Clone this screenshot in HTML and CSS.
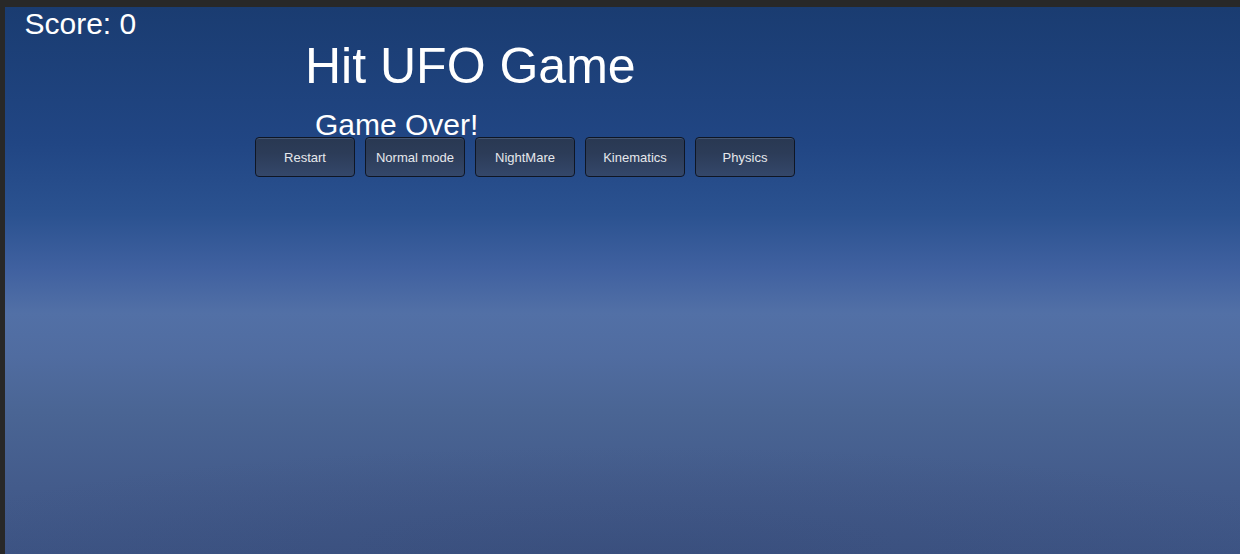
FILE: index.html
```html
<!DOCTYPE html>
<html>
<head>
<meta charset="utf-8">
<link rel="stylesheet" href="styles.css">
</head>
<body>
<div class="frame">
  <main class="game">
    <div class="score">Score: 0</div>
    <h1 class="title">Hit UFO Game</h1>
    <div class="status">Game Over!</div>
    <div class="buttons">
      <button class="btn">Restart</button>
      <button class="btn">Normal mode</button>
      <button class="btn">NightMare</button>
      <button class="btn">Kinematics</button>
      <button class="btn">Physics</button>
    </div>
  </main>
</div>
</body>
</html>
```
FILE: styles.css
```css
html, body {
  margin: 0;
  padding: 0;
  height: 100%;
  background: #282828;
  overflow: hidden;
}
.frame {
  height: 100%;
  box-sizing: border-box;
  padding: 7px 0 0 5px;
}
.game {
  height: 100%;
  box-sizing: border-box;
  font-family: "Liberation Sans", Arial, sans-serif;
  color: #ffffff;
  background:
    radial-gradient(ellipse 60% 20% at 50% 100%, rgba(45, 60, 100, 0.2), rgba(45, 60, 100, 0) 100%),
    linear-gradient(to bottom,
      #1a3c71 0%,
      #214684 25%,
      #2b5290 38%,
      #4061a0 48%,
      #5270a6 56%,
      #506ca0 64%,
      #4a6594 74%,
      #435b8b 88%,
      #3d5484 100%);
  padding-top: 2px;
}
.score {
  font-size: 30px;
  line-height: 30px;
  margin-left: 19.5px;
}
.title {
  margin: 2px 0 0 300px;
  font-weight: normal;
  font-size: 50px;
  line-height: 50px;
}
.status {
  font-size: 30px;
  line-height: 30px;
  margin: 19px 0 0 310px;
}
.buttons {
  display: flex;
  gap: 10px;
  margin: -3px 0 0 250px;
}
.btn {
  width: 100px;
  height: 40px;
  box-sizing: border-box;
  border: 1px solid #0f1624;
  border-radius: 4px;
  background: linear-gradient(to bottom, #293852 0%, #2c3c58 40%, #34476a 100%);
  box-shadow: inset 0 1px 0 rgba(120, 140, 170, 0.35);
  color: #e6e8ec;
  font-family: "Liberation Sans", Arial, sans-serif;
  font-size: 13px;
  padding: 0;
  cursor: pointer;
}
```
